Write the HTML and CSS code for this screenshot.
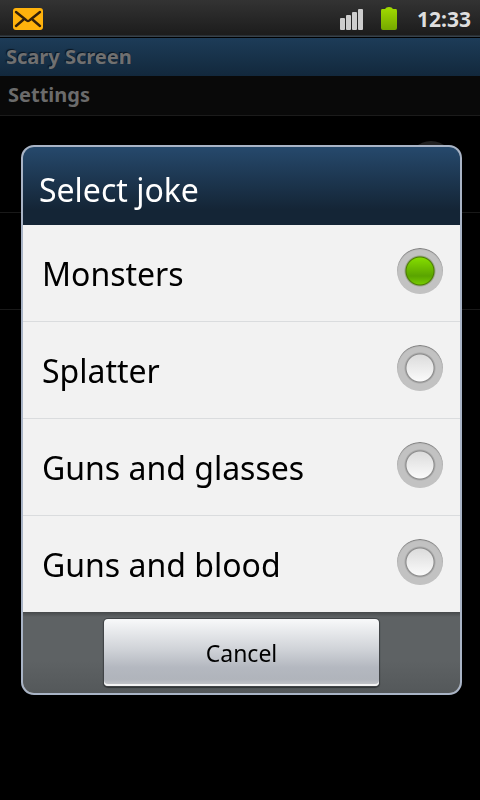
FILE: index.html
```html
<!DOCTYPE html>
<html lang="en">
<head>
<meta charset="UTF-8">
<meta name="viewport" content="width=device-width, initial-scale=1.0">
<title>Scary Screen</title>
<link rel="stylesheet" href="styles.css">
</head>
<body>

<header class="status-bar">
    <svg class="mail" width="32" height="24" viewBox="0 0 32 24">
        <rect x="1" y="1" width="30" height="22" rx="3" fill="#ffb20c"/>
        <path d="M4 5 L14 13 Q16 15 18 13 L28 5 M4 19 L11 13 M28 19 L21 13" fill="none" stroke="#33200a" stroke-width="2.4" stroke-linecap="round"/>
    </svg>
    <svg class="signal" width="24" height="22" viewBox="0 0 24 22" fill="#cccccc">
        <rect x="0" y="10" width="5" height="12" rx="1"/>
        <rect x="6" y="7" width="5" height="15" rx="1"/>
        <rect x="12" y="4" width="5" height="18" rx="1"/>
        <rect x="18" y="1" width="5" height="21" rx="1"/>
    </svg>
    <svg class="battery" width="18" height="24" viewBox="0 0 18 24">
        <defs>
            <linearGradient id="charge" x1="0" y1="0" x2="0" y2="1">
                <stop offset="0" stop-color="#a2dc00"/>
                <stop offset="1" stop-color="#75a800"/>
            </linearGradient>
        </defs>
        <path d="M2 2 H5 Q6 0 9 0 Q12 0 13 2 H16 Q17 2 17 4 V21 Q17 23 15 23 H3 Q1 23 1 21 V4 Q1 2 2 2 Z" fill="url(#charge)"/>
    </svg>
    <span class="clock">12:33</span>
</header>

<main>
    <h1 class="app-title">Scary Screen</h1>
    <h2 class="section-title">Settings</h2>
    <div class="setting"><span class="knob"></span></div>
    <div class="setting"></div>
</main>

<div class="overlay">
    <form class="dialog" role="dialog" aria-labelledby="dialog-title">
        <h2 class="dialog-title" id="dialog-title">Select joke</h2>
        <label class="option"><span class="name">Monsters</span><input type="radio" name="joke" value="monsters" checked></label>
        <label class="option"><span class="name">Splatter</span><input type="radio" name="joke" value="splatter"></label>
        <label class="option"><span class="name">Guns and glasses</span><input type="radio" name="joke" value="glasses"></label>
        <label class="option"><span class="name">Guns and blood</span><input type="radio" name="joke" value="blood"></label>
        <div class="buttons">
            <button type="button" class="cancel">Cancel</button>
        </div>
    </form>
</div>

</body>
</html>
```

FILE: styles.css
```css
* {
    box-sizing: border-box;
}
body {
    margin: 0;
    min-height: 100vh;
    background-color: #000;
    font-family: "Noto Sans", sans-serif;
}
h1, h2 {
    margin: 0;
}
.status-bar {
    display: flex;
    align-items: center;
    height: 38px;
    padding: 0 9px 0 12px;
    background: linear-gradient(#333, #1c1c1c 35px, #37424b 36px, #37424b 37px, #000 37px);
}
.mail {
    margin-bottom: 1px;
}
.signal {
    margin-left: auto;
}
.battery {
    margin: 0 19px 0 16px;
}
.clock {
    color: #dedede;
    font-size: 21px;
    font-weight: bold;
}
.app-title {
    height: 38px;
    padding-left: 6px;
    background: linear-gradient(#1d3c58, #12283c);
    color: #707070;
    font-size: 20px;
    line-height: 38px;
    text-shadow: -1px -1px 1px #0a1520;
}
.section-title {
    height: 40px;
    padding-left: 8px;
    border-bottom: 1px solid #1b1b1b;
    background-color: #090909;
    color: #6b6b6b;
    font-size: 20px;
    line-height: 38px;
}
.setting {
    display: flex;
    align-items: center;
    justify-content: flex-end;
    height: 97px;
    padding-right: 26px;
    border-bottom: 1px solid #191919;
}
.knob {
    width: 46px;
    height: 46px;
    border-radius: 50%;
    background-color: #222;
}
.overlay {
    position: fixed;
    inset: 0;
    display: flex;
    align-items: center;
    padding: 40px 18px 0 21px;
}
.dialog {
    flex: 1;
    overflow: hidden;
    border: 2px solid #a9b4c6;
    border-radius: 13px;
    background-color: #f2f2f2;
}
.dialog-title {
    padding: 8px 16px 0;
    background: linear-gradient(#26496c, #142536 80%);
    color: #fff;
    font-size: 32px;
    font-weight: normal;
    line-height: 70px;
}
.option {
    display: flex;
    align-items: center;
    justify-content: space-between;
    height: 97px;
    padding: 0 17px 4px 19px;
    border-bottom: 1px solid #dadcde;
    color: #000;
    font-size: 32px;
}
.option:nth-of-type(4) {
    height: 96px;
    border-bottom: none;
}
.name {
    padding-top: 4px;
}
.option input {
    appearance: none;
    width: 46px;
    height: 46px;
    margin: 0;
    border-radius: 50%;
    background:
        radial-gradient(circle, transparent 13px, #8a8a8a 14px, #aaa 15px, transparent 16px),
        radial-gradient(circle, transparent 14px, #c2c2c2 15px),
        linear-gradient(#dcdcdc 10px, #fafafa 36px);
    box-shadow: inset 0 1px 1px #777;
}
.option input:checked {
    background:
        radial-gradient(circle, transparent 13px, #4a7a00 14px, #9aa58a 15px, transparent 16px),
        radial-gradient(circle, transparent 14px, #c2c2c2 15px),
        linear-gradient(#84dc00 10px, #64b000 24px, #5aa400 28px, #74c800 36px);
}
.buttons {
    display: flex;
    justify-content: center;
    padding: 7px 0;
    background: linear-gradient(#46494b, #5e6264 5px, #5e6264 60%, #54585a);
}
.cancel {
    width: 63%;
    height: 67px;
    border: none;
    border-radius: 4px;
    background: linear-gradient(#f8f9fa, #d0d3d8 45%, #b4b8c0 72%, #b0b4bb 90%, #c8c9cd);
    box-shadow: inset 0 -2px 0 #f4f4f4, 0 0 0 1px #414447, 0 1px 1px 1px #303335;
    color: #000;
    font-family: inherit;
    font-size: 23px;
}
```
